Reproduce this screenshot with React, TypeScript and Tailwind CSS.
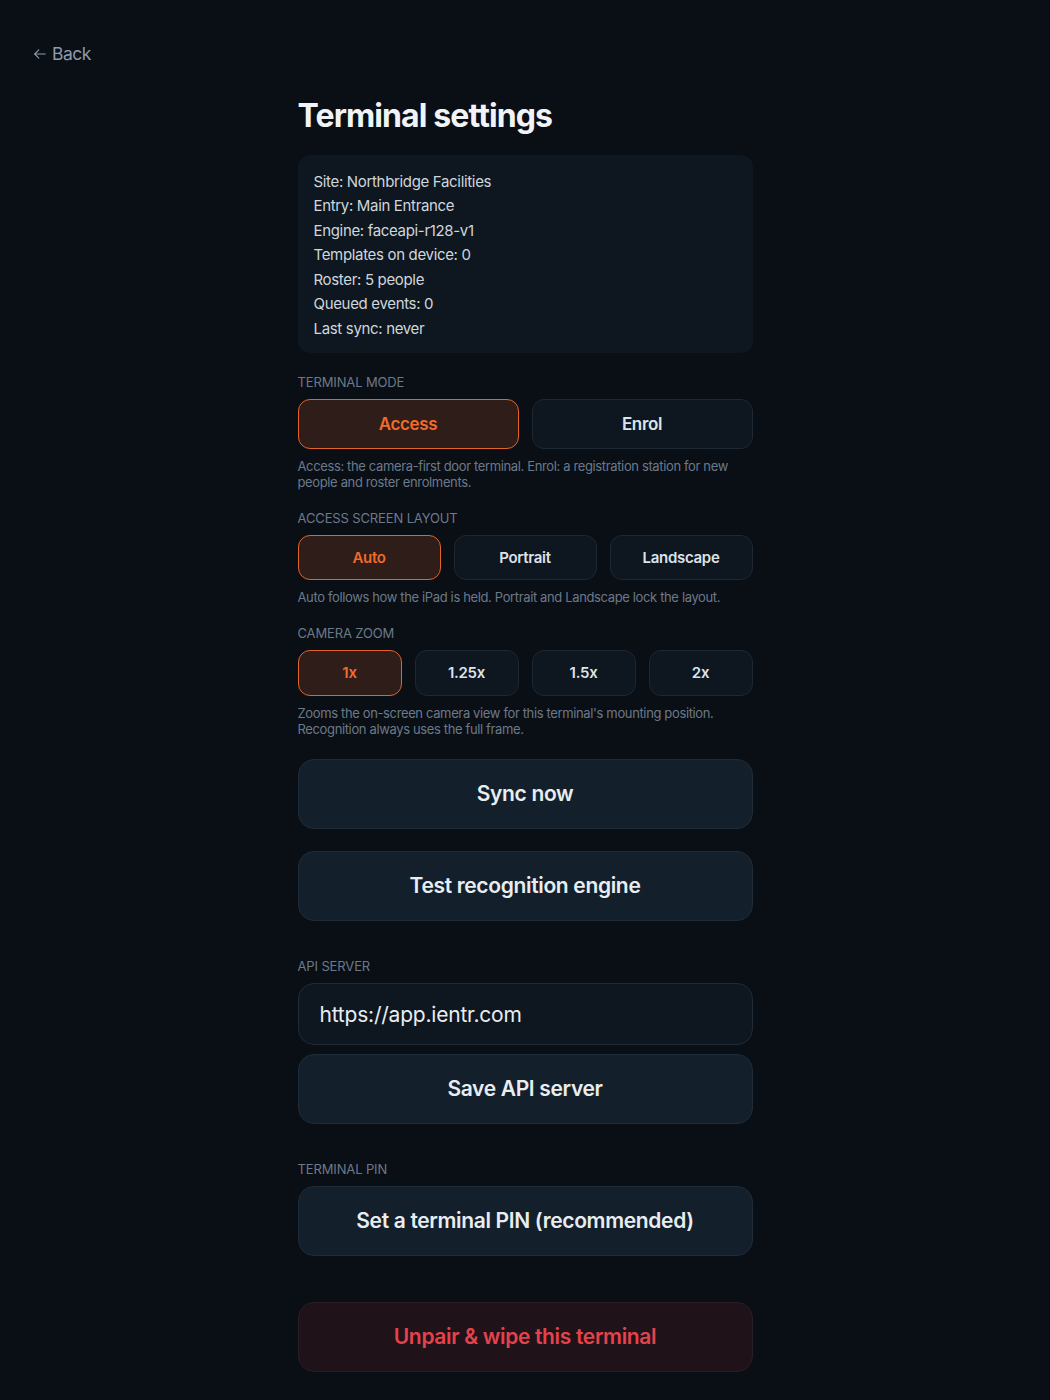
import React, { useState } from 'react';

const font = { fontFamily: 'Inter, "Noto Sans", sans-serif' };

const Label = ({ children, className = '' }: { children: React.ReactNode; className?: string }) => (
  <div className={`text-[13px] leading-4 uppercase tracking-[-0.01em] text-[#6b7a8a] ${className}`}>{children}</div>
);

const Help = ({ children }: { children: React.ReactNode }) => (
  <p className="mt-[9px] text-[13px] leading-4 tracking-[-0.028em] text-[#6b7a8a]">{children}</p>
);

const Segment = ({
  options,
  value,
  onChange,
  height,
  textSize,
}: {
  options: string[];
  value: string;
  onChange: (v: string) => void;
  height: string;
  textSize: string;
}) => (
  <div className="mt-[9px] flex gap-[13px]">
    {options.map((o) => {
      const active = o === value;
      return (
        <button
          key={o}
          onClick={() => onChange(o)}
          className={`flex-1 ${height} ${textSize} pt-[1px] tracking-[-0.02em] rounded-xl border font-semibold ${
            active
              ? 'border-[#e2642a] bg-[#2f1d1a] text-[#f26a2c]'
              : 'border-[#1c2834] bg-[#0e1620] text-[#dde3ea]'
          }`}
        >
          {o}
        </button>
      );
    })}
  </div>
);

const BigButton = ({ children, className = '' }: { children: React.ReactNode; className?: string }) => (
  <button
    className={`w-full h-[70px] rounded-2xl border border-[#1f2c38] bg-[#13202b] text-[21px] tracking-[-0.016em] font-semibold text-[#e8edf2] ${className}`}
  >
    {children}
  </button>
);

export default function App() {
  const [mode, setMode] = useState('Access');
  const [layout, setLayout] = useState('Auto');
  const [zoom, setZoom] = useState('1x');
  const [server, setServer] = useState('https://app.ientr.com');

  const info = [
    'Site: Northbridge Facilities',
    'Entry: Main Entrance',
    'Engine: faceapi-r128-v1',
    'Templates on device: 0',
    'Roster: 5 people',
    'Queued events: 0',
    'Last sync: never',
  ];

  return (
    <div className="min-h-screen bg-[#0a0e15] pb-[28px]" style={font}>
      <div className="pt-[43px] pl-[33px]">
        <button className="flex items-center gap-[5px] text-[17.5px] leading-[22px] tracking-[-0.03em] text-[#8d9bab]">
          <svg width="14" height="14" viewBox="0 0 24 24" fill="none" stroke="currentColor" strokeWidth="1.9" strokeLinecap="round" strokeLinejoin="round">
            <path d="M21 12H3" />
            <path d="M10 19l-7-7 7-7" />
          </svg>
          Back
        </button>
      </div>

      <div className="mx-auto w-[455px] mt-[31px]">
        <h1 className="text-[32px] leading-10 font-bold tracking-[-0.028em] text-[#f1f4f7]">Terminal settings</h1>

        <div className="mt-[19px] rounded-xl bg-[#0e1620] px-4 pt-[14.5px] pb-[12px] text-[15px] leading-[24.5px] tracking-[-0.022em] text-[#cfd6de]">
          {info.map((l) => (
            <div key={l}>{l}</div>
          ))}
        </div>

        <Label className="mt-[21px]">Terminal mode</Label>
        <Segment options={['Access', 'Enrol']} value={mode} onChange={setMode} height="h-[50px]" textSize="text-[17px]" />
        <Help>Access: the camera-first door terminal. Enrol: a registration station for new people and roster enrolments.</Help>

        <Label className="mt-[20px]">Access screen layout</Label>
        <Segment options={['Auto', 'Portrait', 'Landscape']} value={layout} onChange={setLayout} height="h-[45px]" textSize="text-[15px]" />
        <Help>Auto follows how the iPad is held. Portrait and Landscape lock the layout.</Help>

        <Label className="mt-[20px]">Camera zoom</Label>
        <Segment options={['1x', '1.25x', '1.5x', '2x']} value={zoom} onChange={setZoom} height="h-[46px]" textSize="text-[15px]" />
        <Help>Zooms the on-screen camera view for this terminal's mounting position. Recognition always uses the full frame.</Help>

        <BigButton className="mt-[22px]">Sync now</BigButton>
        <BigButton className="mt-[22px]">Test recognition engine</BigButton>

        <Label className="mt-[37px]">API server</Label>
        <input
          value={server}
          onChange={(e) => setServer(e.target.value)}
          className="mt-[9px] block w-full h-[62px] rounded-2xl border border-[#1f2c38] bg-[#0e1620] px-[21px] text-[21px] tracking-[-0.01em] text-[#e8edf2] outline-none"
        />
        <BigButton className="mt-[9px]">Save API server</BigButton>

        <Label className="mt-[37px]">Terminal PIN</Label>
        <BigButton className="mt-[9px]">Set a terminal PIN (recommended)</BigButton>

        <button className="mt-[46px] w-full h-[70px] rounded-2xl border border-[#2a1e26] bg-[#1f1219] text-[21px] tracking-[-0.016em] font-semibold text-[#e5434b]">
          Unpair &amp; wipe this terminal
        </button>
      </div>
    </div>
  );
}
